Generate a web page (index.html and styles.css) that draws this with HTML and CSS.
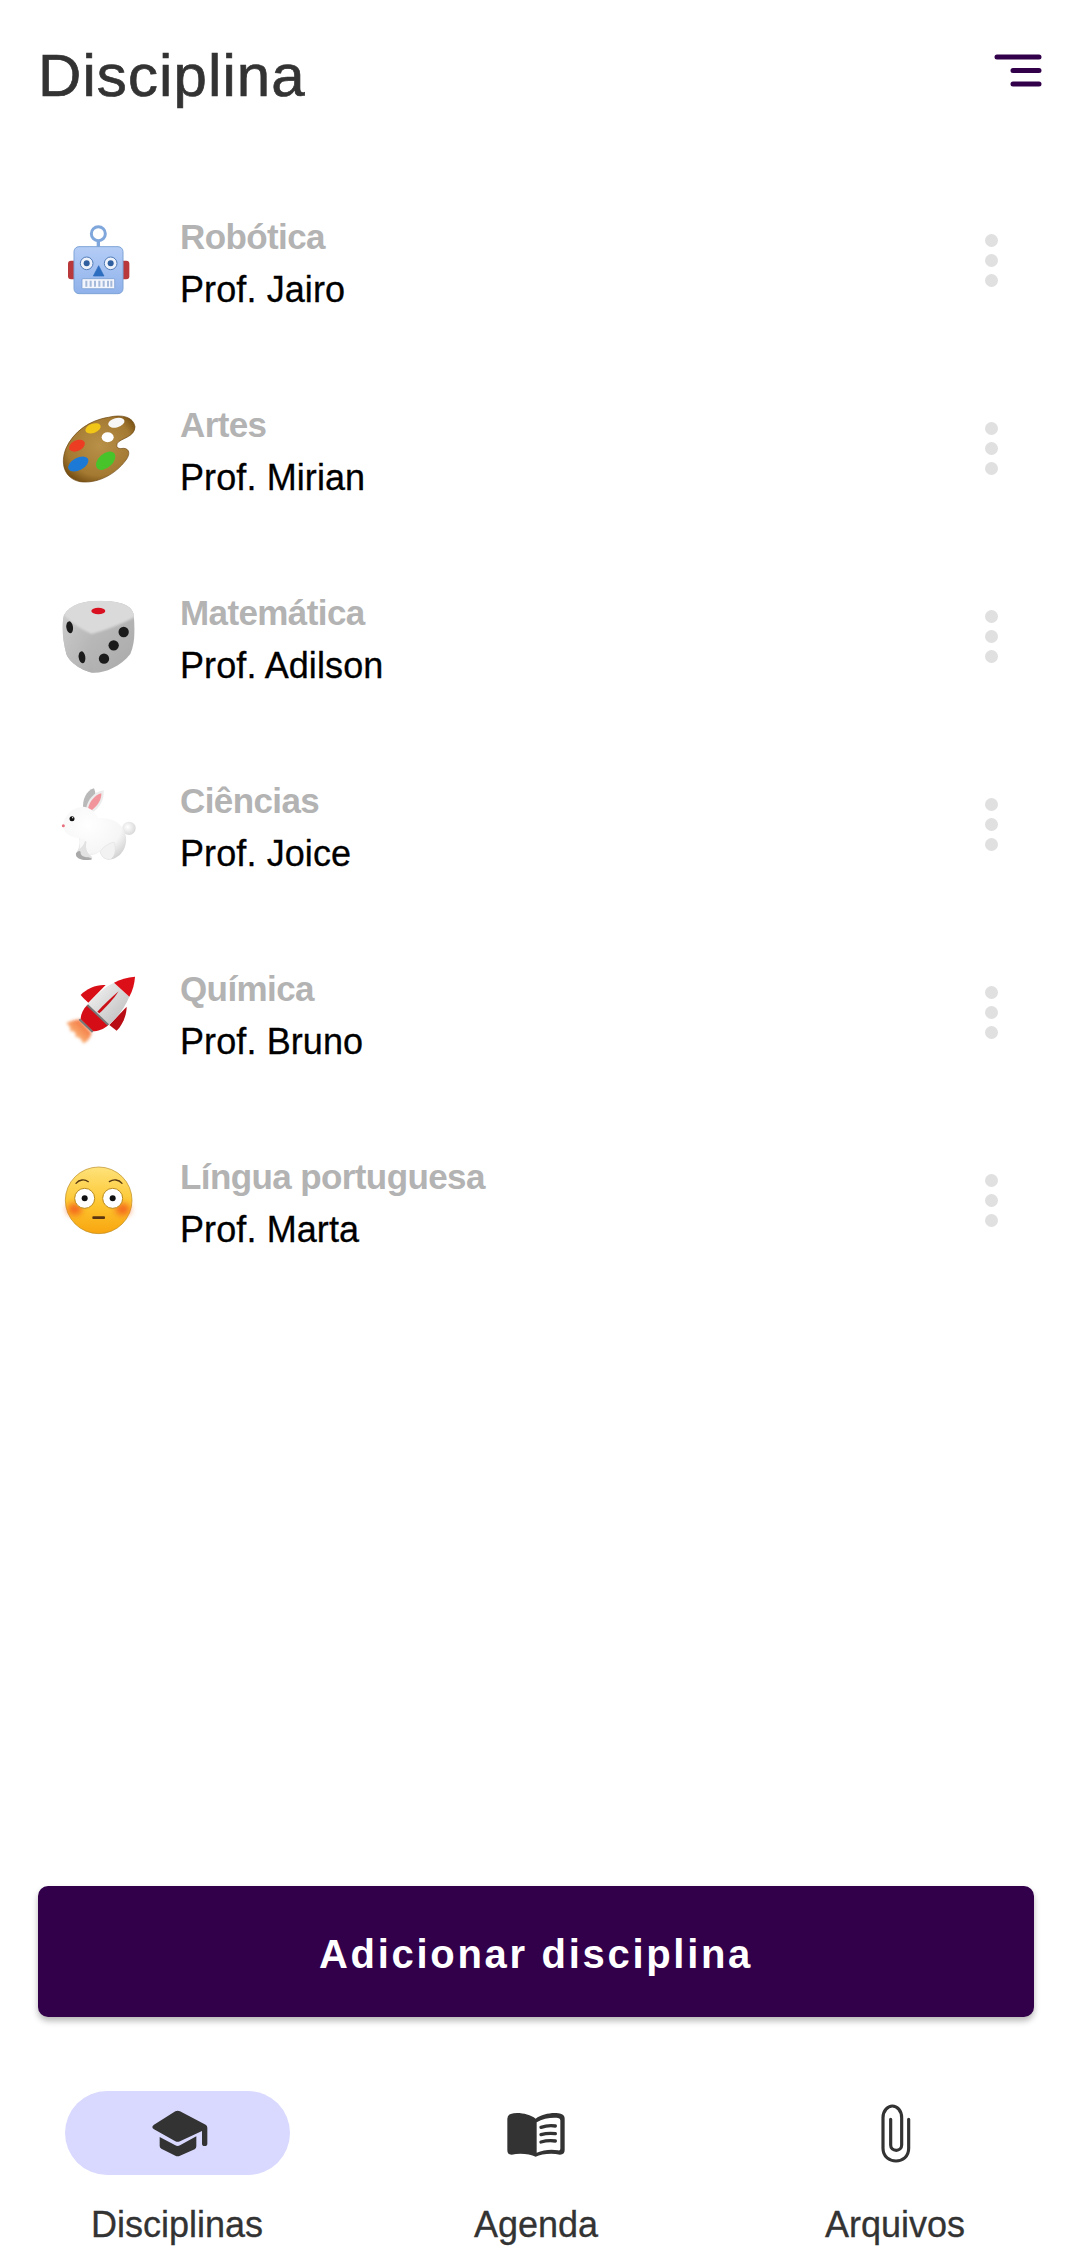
FILE: index.html
```html
<!DOCTYPE html>
<html lang="pt">
<head>
<meta charset="utf-8">
<title>Disciplina</title>
<link rel="stylesheet" href="styles.css">
</head>
<body>
<div class="app">
  <header class="header">
    <h1 class="title">Disciplina</h1>
    <svg class="menu" viewBox="0 0 48 34" aria-hidden="true"><path d="M3 3H45M19 16.500H45M19 30H45"/></svg>
  </header>
  <ul class="list">
    <li class="row">
      <svg class="emoji" viewBox="54 60 240 240" aria-hidden="true">
        <defs><linearGradient id="rb" x1="0" y1="0" x2="0" y2="1"><stop offset="0" stop-color="#b4cdf6"/><stop offset="1" stop-color="#8fb1ea"/></linearGradient></defs>
        <rect x="84" y="182" width="30" height="56" rx="9" fill="#b9383c"/>
        <rect x="238" y="182" width="30" height="56" rx="9" fill="#b9383c"/>
        <circle cx="175" cy="101" r="21" fill="none" stroke="#80a7dc" stroke-width="9"/>
        <rect x="170" y="121" width="10" height="22" fill="#80a7dc"/>
        <rect x="102" y="140" width="147" height="141" rx="15" fill="url(#rb)" stroke="#7ea3d6" stroke-width="3"/>
        <circle cx="140" cy="190" r="19" fill="#eef3fb" stroke="#517cb8" stroke-width="3"/>
        <circle cx="140" cy="190" r="9" fill="#2f5f9e"/>
        <circle cx="212" cy="190" r="19" fill="#eef3fb" stroke="#517cb8" stroke-width="3"/>
        <circle cx="212" cy="190" r="9" fill="#2f5f9e"/>
        <path d="M176 197L160 228H192Z" fill="#2e6ec0" stroke="#2e6ec0" stroke-width="2" stroke-linejoin="round"/>
        <rect x="126" y="236" width="98" height="30" rx="3" fill="#f2f5fb" stroke="#6f95cc" stroke-width="2"/>
        <path d="M139 242V260M152 242V260M165 242V260M178 242V260M191 242V260M204 242V260M214 242V260" stroke="#a4b8da" stroke-width="6"/>
      </svg>
      <div class="info"><span class="subject">Robótica</span><span class="teacher">Prof. Jairo</span></div>
      <span class="more" aria-hidden="true"><i class="dot"></i><i class="dot"></i><i class="dot"></i></span>
    </li>
    <li class="row">
      <svg class="emoji" viewBox="54 624 240 240" aria-hidden="true">
        <defs>
          <radialGradient id="pa" cx="0.5" cy="0.45" r="0.6"><stop offset="0" stop-color="#b99048"/><stop offset="0.75" stop-color="#a47a32"/><stop offset="1" stop-color="#7a5215"/></radialGradient>
          <filter id="pb"><feGaussianBlur stdDeviation="1.500"/></filter>
        </defs>
        <path d="M285 680C280 650 245 642 205 652C150 660 100 695 78 745C60 790 72 835 120 845C170 852 225 825 258 780C272 762 268 745 250 745C238 747 226 745 232 730C240 715 285 712 285 680Z" fill="url(#pa)" stroke="#6d4712" stroke-width="2"/>
        <ellipse cx="203" cy="712" rx="18" ry="15" fill="#fff"/>
        <g filter="url(#pb)">
          <ellipse cx="159" cy="685" rx="24" ry="14" transform="rotate(-20 159 685)" fill="#f2c616"/>
          <ellipse cx="229" cy="668" rx="25" ry="14" transform="rotate(-15 229 668)" fill="#f7f7f7"/>
          <ellipse cx="111" cy="737" rx="25" ry="16" transform="rotate(-25 111 737)" fill="#ec3c22"/>
          <ellipse cx="115" cy="792" rx="33" ry="19" transform="rotate(-28 115 792)" fill="#1f79d6"/>
          <ellipse cx="197" cy="782" rx="34" ry="21" transform="rotate(-42 197 782)" fill="#46c42c"/>
        </g>
      </svg>
      <div class="info"><span class="subject">Artes</span><span class="teacher">Prof. Mirian</span></div>
      <span class="more" aria-hidden="true"><i class="dot"></i><i class="dot"></i><i class="dot"></i></span>
    </li>
    <li class="row">
      <svg class="emoji" viewBox="54 48 240 240" aria-hidden="true">
        <defs>
          <linearGradient id="dl" x1="0" y1="0" x2="1" y2="1"><stop offset="0" stop-color="#cdcdcd"/><stop offset="1" stop-color="#adadad"/></linearGradient>
          <linearGradient id="dr" x1="0" y1="0" x2="1" y2="1"><stop offset="0" stop-color="#c6c6c6"/><stop offset="1" stop-color="#a8a8a8"/></linearGradient>
          <clipPath id="dc"><path d="M175 62C225 62 272 70 280 100C287 145 285 190 271 222C240 262 190 280 160 278C130 275 88 248 79 222C68 180 64 135 72 105C90 72 135 62 175 62Z"/></clipPath>
          <filter id="db" x="-20%" y="-20%" width="140%" height="140%"><feGaussianBlur stdDeviation="3"/></filter>
        </defs>
        <g clip-path="url(#dc)">
          <rect x="54" y="48" width="240" height="240" fill="url(#dr)"/>
          <path d="M60 95C60 140 60 200 70 230C100 260 130 285 162 285C150 250 146 200 152 165C120 150 85 120 60 95Z" fill="url(#dl)" filter="url(#db)"/>
          <path d="M175 55C135 55 85 70 66 100C90 128 125 150 155 162C190 152 250 132 288 108C282 70 225 55 175 55Z" fill="#dadada" filter="url(#db)"/>
        </g>
        <ellipse cx="175" cy="93" rx="21" ry="10" fill="#d81020"/>
        <ellipse cx="89" cy="142" rx="10" ry="18" transform="rotate(-8 89 142)" fill="#1b1b1b"/>
        <ellipse cx="126" cy="232" rx="10" ry="18" transform="rotate(-8 126 232)" fill="#1b1b1b"/>
        <circle cx="251" cy="156" r="15.500" fill="#1b1b1b"/>
        <circle cx="221" cy="196" r="15.500" fill="#1b1b1b"/>
        <circle cx="192" cy="236" r="15.500" fill="#1b1b1b"/>
      </svg>
      <div class="info"><span class="subject">Matemática</span><span class="teacher">Prof. Adilson</span></div>
      <span class="more" aria-hidden="true"><i class="dot"></i><i class="dot"></i><i class="dot"></i></span>
    </li>
    <li class="row">
      <svg class="emoji" viewBox="54 612 240 240" aria-hidden="true">
        <defs>
          <radialGradient id="rab" cx="0.4" cy="0.35" r="0.75"><stop offset="0" stop-color="#ffffff"/><stop offset="0.7" stop-color="#f6f6f6"/><stop offset="1" stop-color="#d2d2d2"/></radialGradient>
          <radialGradient id="rat" cx="0.4" cy="0.4" r="0.7"><stop offset="0" stop-color="#ffffff"/><stop offset="1" stop-color="#d4d4d4"/></radialGradient>
        </defs>
        <path d="M130 690C125 660 140 630 162 625C172 650 165 675 150 695Z" fill="#b9b9b9"/>
        <path d="M138 690C140 660 165 634 191 631C193 660 178 685 158 697Z" fill="#ececec"/>
        <path d="M144 686C148 665 165 645 184 640C185 660 172 678 156 690Z" fill="#f2949b"/>
        <circle cx="267" cy="745" r="20" fill="url(#rat)"/>
        <path d="M68 738C72 705 100 680 130 680C155 682 165 700 175 714C210 712 250 725 258 770C262 805 240 835 210 838C195 840 185 830 180 815C170 822 160 825 150 825L118 775C100 772 72 765 68 738Z" fill="url(#rab)"/>
        <path d="M118 775C122 795 115 810 108 820C105 835 125 842 145 840C160 840 160 832 150 825C140 815 135 800 140 785Z" fill="#e2e2e2"/>
        <path d="M118 775C122 790 120 800 118 808C128 800 135 790 136 778Z" fill="#f8f8f8"/>
        <path d="M108 820C112 815 118 810 122 816C120 826 132 832 145 832C160 836 158 840 145 840C125 842 105 835 108 820Z" fill="#a9a9a9"/>
        <path d="M180 815C190 800 205 790 222 786C228 805 228 825 212 838C195 840 185 830 180 815Z" fill="#f2f2f2" stroke="#dcdcdc" stroke-width="1.500"/>
        <circle cx="96" cy="716" r="7.500" fill="#111"/>
        <circle cx="98" cy="713" r="2" fill="#fff"/>
        <circle cx="70" cy="737" r="4.500" fill="#e8707e"/>
      </svg>
      <div class="info"><span class="subject">Ciências</span><span class="teacher">Prof. Joice</span></div>
      <span class="more" aria-hidden="true"><i class="dot"></i><i class="dot"></i><i class="dot"></i></span>
    </li>
    <li class="row">
      <svg class="emoji" viewBox="54 36 240 240" aria-hidden="true">
        <defs>
          <linearGradient id="rw" x1="0" y1="0" x2="1" y2="1"><stop offset="0" stop-color="#f8f8f8"/><stop offset="1" stop-color="#b8b8b8"/></linearGradient>
          <linearGradient id="rf" x1="1" y1="0" x2="0" y2="1"><stop offset="0" stop-color="#f0582a"/><stop offset="0.6" stop-color="#f9a86c"/><stop offset="1" stop-color="#fde2cf"/></linearGradient>
          <filter id="rs"><feGaussianBlur stdDeviation="4"/></filter>
        </defs>
        <path d="M118 178C100 180 90 184 78 190C90 196 92 205 90 214C100 212 110 215 106 232C118 228 124 240 130 250C142 245 150 235 155 218Z" fill="url(#rf)" filter="url(#rs)"/>
        <path d="M197 75C170 73 140 85 122 105C130 115 138 122 145 128Z" fill="#d90f18"/>
        <path d="M260 140C260 165 248 195 230 212L208 195Z" fill="#b80d14"/>
        <path d="M142 135C128 148 122 165 122 178L158 214C172 214 192 208 205 195Z" fill="#d40d16"/>
        <path d="M222 68C195 80 165 105 142 135L205 195C235 172 255 140 268 110Z" fill="url(#rw)"/>
        <path d="M285 50C262 52 240 58 222 68L268 110C278 92 284 70 285 50Z" fill="#dc0f18"/>
        <path d="M172 155C190 135 215 112 236 94C222 116 198 142 178 160Z" fill="#cc1018"/>
        <path d="M142 135L205 195M118 178L158 216" stroke="#777" stroke-width="6" fill="none"/>
      </svg>
      <div class="info"><span class="subject">Química</span><span class="teacher">Prof. Bruno</span></div>
      <span class="more" aria-hidden="true"><i class="dot"></i><i class="dot"></i><i class="dot"></i></span>
    </li>
    <li class="row">
      <svg class="emoji" viewBox="54 600 240 240" aria-hidden="true">
        <defs>
          <linearGradient id="fy" x1="0" y1="0" x2="0" y2="1"><stop offset="0" stop-color="#fee27a"/><stop offset="0.55" stop-color="#fdc630"/><stop offset="1" stop-color="#f8a50f"/></linearGradient>
          <filter id="fb" x="-50%" y="-50%" width="200%" height="200%"><feGaussianBlur stdDeviation="9"/></filter>
        </defs>
        <circle cx="176" cy="721" r="100" fill="url(#fy)" stroke="#b98a20" stroke-width="2"/>
        <ellipse cx="104" cy="748" rx="22" ry="18" fill="#f4691e" filter="url(#fb)"/>
        <ellipse cx="248" cy="748" rx="22" ry="18" fill="#f4691e" filter="url(#fb)"/>
        <circle cx="134" cy="715" r="30" fill="#fff" stroke="#bb8a1a" stroke-width="3"/>
        <circle cx="218" cy="715" r="30" fill="#fff" stroke="#bb8a1a" stroke-width="3"/>
        <circle cx="134" cy="715" r="9" fill="#111"/>
        <circle cx="218" cy="715" r="9" fill="#111"/>
        <path d="M108 670C118 658 134 657 145 665M208 665C220 657 236 658 246 670" fill="none" stroke="#5a3a10" stroke-width="4" stroke-linecap="round"/>
        <rect x="157" y="769" width="38" height="8" rx="3" fill="#5a3410"/>
      </svg>
      <div class="info"><span class="subject">Língua portuguesa</span><span class="teacher">Prof. Marta</span></div>
      <span class="more" aria-hidden="true"><i class="dot"></i><i class="dot"></i><i class="dot"></i></span>
    </li>
  </ul>
  <button class="add" type="button">Adicionar disciplina</button>
  <nav class="nav">
    <a class="tab">
      <span class="pill pill-active">
        <svg class="tab-icon" viewBox="254 62 192 192" aria-hidden="true"><path d="M345 93Q352 89 359 93L436 133Q441 136 441 142V190Q441 197 433 197Q425 197 425 190V152L359 183Q352 186 345 183L281 147Q271 140 281 133Z"/><path d="M298 170L345 195Q352 199 359 195L408 168V198Q408 204 403 207L359 226Q352 229 345 226L303 205Q298 202 298 197Z"/></svg>
      </span>
      <span class="tab-label">Disciplinas</span>
    </a>
    <a class="tab">
      <span class="pill">
        <svg class="tab-icon" viewBox="72 93 192 192" aria-hidden="true"><path d="M167 146C147 131 112 125 92 132Q82 135 82 146V240Q82 254 95 254C120 248 150 252 167 260C184 252 214 248 240 254Q254 254 254 240V146Q254 135 244 132C224 125 187 131 167 146Z"/><path class="page" d="M170 157C188 146 214 142 234 144Q241 145 241 151V236Q241 243 234 241C213 237 190 240 170 248Z"/><path class="lines" d="M183 172Q204 165 226 168M183 194Q204 188 226 191M183 216Q204 210 226 213"/></svg>
      </span>
      <span class="tab-label">Agenda</span>
    </a>
    <a class="tab">
      <span class="pill">
        <svg class="tab-icon clip" viewBox="1150 90 192 192" aria-hidden="true"><path d="M1287 145V232C1287 258 1268 270 1249 270C1230 270 1210 258 1210 232V140C1210 118 1225 105 1238 105C1252 105 1266 118 1266 140V222C1266 232 1258 238 1250 238C1240 238 1233 232 1233 222V145"/></svg>
      </span>
      <span class="tab-label">Arquivos</span>
    </a>
  </nav>
</div>
</body>
</html>
```
FILE: styles.css
```css
* { box-sizing: border-box; }
html, body { margin: 0; padding: 0; background: #fff; }
body { font-family: "Liberation Sans", Arial, sans-serif; }

.app {
  display: flex;
  flex-direction: column;
  width: 1072px;
  height: 2260px;
  overflow: hidden;
}

.header {
  display: flex;
  align-items: center;
  justify-content: space-between;
  height: 152px;
  padding: 0 30px 0 38px;
  flex: none;
}
.title {
  margin: 0;
  font-size: 60px;
  line-height: 66px;
  font-weight: 400;
  color: #333;
  letter-spacing: 1.100px;
  -webkit-text-stroke: 0.7px #333;
}
.menu {
  width: 48px;
  height: 34px;
  margin-bottom: 10px;
  fill: none;
  stroke: #32004b;
  stroke-width: 5;
  stroke-linecap: round;
}

.list {
  list-style: none;
  margin: 14px 0 0;
  padding: 0;
  flex: 1;
}
.row {
  display: flex;
  align-items: center;
  height: 188px;
  padding: 0 74px 0 58px;
}
.emoji {
  width: 80px;
  height: 80px;
  flex: none;
}
.info {
  display: flex;
  flex-direction: column;
  flex: 1;
  margin: 6px 0 0 42px;
}
.subject {
  font-size: 35px;
  line-height: 53px;
  font-weight: 700;
  color: #b3b3b3;
  letter-spacing: -0.6px;
}
.teacher {
  font-size: 36px;
  line-height: 53px;
  color: #000;
  letter-spacing: 0.1px;
  -webkit-text-stroke: 0.3px #000;
}
.more {
  display: flex;
  flex-direction: column;
  gap: 7px;
}
.dot {
  width: 13px;
  height: 13px;
  border-radius: 50%;
  background: #e0e0e0;
}

.add {
  flex: none;
  height: 131px;
  margin: 0 38px;
  padding: 5px 0 0;
  border: 0;
  border-radius: 10px;
  background: #32004b;
  color: #fff;
  font-family: inherit;
  font-size: 40px;
  font-weight: 700;
  letter-spacing: 2.700px;
  box-shadow: 0 4px 6px rgba(0, 0, 0, 0.28);
}

.nav {
  display: grid;
  grid-template-columns: repeat(3, 359px);
  justify-content: center;
  flex: none;
  padding: 74px 0 10px;
}
.tab {
  display: flex;
  flex-direction: column;
  align-items: center;
  gap: 25px;
}
.pill {
  display: flex;
  align-items: center;
  justify-content: center;
  width: 225px;
  height: 84px;
  border-radius: 42px;
}
.pill-active { background: #d9d9ff; }
.tab-icon {
  width: 64px;
  height: 64px;
  fill: #333;
}
.tab-icon .page { fill: #fff; }
.tab-icon .lines {
  fill: none;
  stroke: #333;
  stroke-width: 10;
  stroke-linecap: round;
}
.clip {
  fill: none;
  stroke: #333;
  stroke-width: 9.500;
  stroke-linecap: round;
}
.tab-label {
  font-size: 36px;
  line-height: 50px;
  color: #333;
  -webkit-text-stroke: 0.3px #333;
}
```
